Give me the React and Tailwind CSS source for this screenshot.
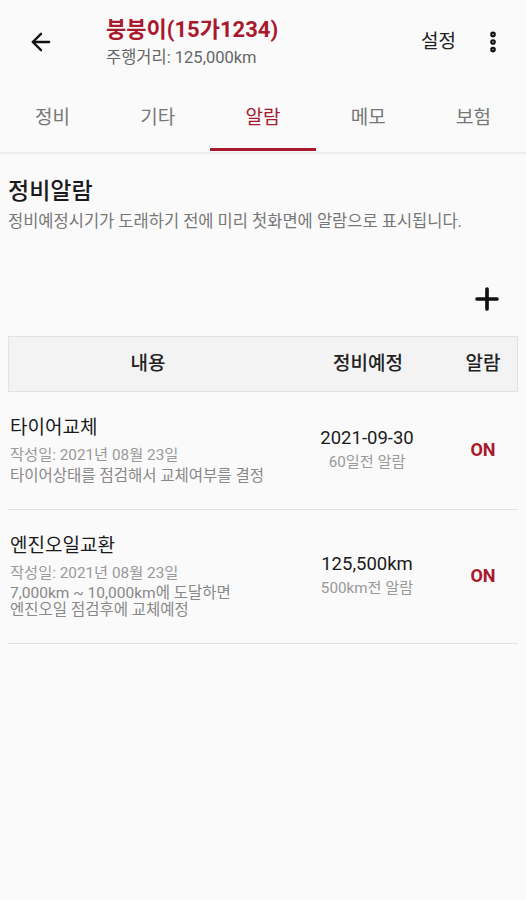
import { ArrowLeft, EllipsisVertical, Plus } from 'lucide-react'

const font = { fontFamily: "Roboto, 'Noto Sans CJK KR', sans-serif" }

const tabs = ['정비', '기타', '알람', '메모', '보험']

const alarms = [
  {
    title: '타이어교체',
    date: '작성일: 2021년 08월 23일',
    desc: ['타이어상태를 점검해서 교체여부를 결정'],
    plan: '2021-09-30',
    before: '60일전 알람',
  },
  {
    title: '엔진오일교환',
    date: '작성일: 2021년 08월 23일',
    desc: ['7,000km ~ 10,000km에 도달하면', '엔진오일 점검후에 교체예정'],
    plan: '125,500km',
    before: '500km전 알람',
  },
]

export default function App() {
  return (
    <div className="min-h-[900px] w-[526px] bg-[#fafafa] text-[#222]" style={font}>
      <div className="border-b border-[#ececec] bg-[#fafafa] shadow-[0_1px_2px_rgba(0,0,0,0.06)]">
        <div className="flex h-[84px] items-center">
          <div className="flex w-[106px] pl-[27px]">
            <ArrowLeft size={28} strokeWidth={2} className="text-[#111]" />
          </div>
          <div className="flex-1">
            <p className="text-[22px] font-bold leading-[26px] text-[#a8192e]">붕붕이(15가1234)</p>
            <p className="mt-[5px] text-[16.5px] leading-[20px] text-[#666]">주행거리: 125,000km</p>
          </div>
          <p className="mr-[24px] text-[19px] text-[#222]">설정</p>
          <div className="mr-[20px] flex justify-center">
            <EllipsisVertical size={26} strokeWidth={3.2} className="text-[#111]" />
          </div>
        </div>
        <div className="flex h-[68px]">
          {tabs.map((t) => (
            <div key={t} className="relative flex flex-1 items-start justify-center pt-[22px]">
              <span className={t === '알람' ? 'text-[19px] leading-[24px] text-[#a8192e]' : 'text-[19px] leading-[24px] text-[#777]'}>{t}</span>
              {t === '알람' && <div className="absolute bottom-[1px] left-0 right-0 h-[3px] bg-[#a8192e]" />}
            </div>
          ))}
        </div>
      </div>

      <div className="px-[8px]">
        <h2 className="mt-[24px] text-[23px] font-medium leading-[30px] text-[#1a1a1a]">정비알람</h2>
        <p className="mt-[4px] text-[16.5px] leading-[22px] text-[#777]">정비예정시기가 도래하기 전에 미리 첫화면에 알람으로 표시됩니다.</p>

        <div className="mt-[49px] flex justify-end pr-[14px]">
          <Plus size={34} strokeWidth={2.6} className="text-[#111]" />
        </div>

        <div className="mt-[20px] flex h-[56px] items-center border border-[#e2e2e2] bg-[#f3f3f3] text-[19px] font-medium text-[#222]">
          <div className="w-[278px] text-center">내용</div>
          <div className="w-[162px] text-center">정비예정</div>
          <div className="flex-1 text-center">알람</div>
        </div>

        {alarms.map((a) => (
          <div key={a.title} className="flex items-center border-b border-[#e0e0e0] pb-[24px] pt-[23px]">
            <div className="w-[278px] pl-[2px]">
              <p className="text-[19px] leading-[26px] text-[#1a1a1a]">{a.title}</p>
              <p className="mt-[4px] text-[15.3px] leading-[20px] text-[#999]">{a.date}</p>
              <div className="mt-[2.5px]">
                {a.desc.map((d) => (
                  <p key={d} className="text-[15.5px] leading-[17px] text-[#888]">{d}</p>
                ))}
              </div>
            </div>
            <div className="w-[162px] text-center">
              <p className="text-[18.5px] leading-[24px] text-[#1a1a1a]">{a.plan}</p>
              <p className="text-[15.2px] leading-[24px] text-[#999]">{a.before}</p>
            </div>
            <div className="flex-1 text-center text-[18px] font-bold text-[#a8192e]">ON</div>
          </div>
        ))}
      </div>
    </div>
  )
}
